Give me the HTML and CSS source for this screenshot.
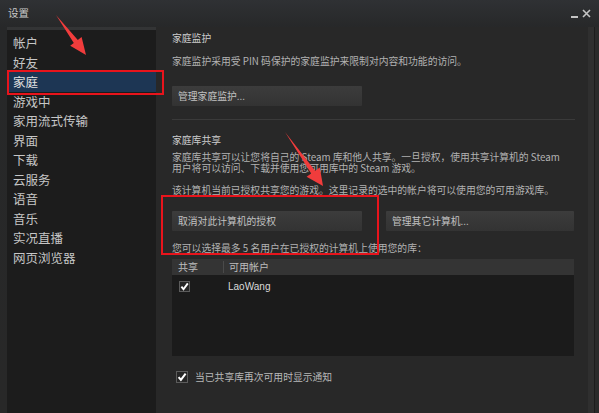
FILE: index.html
```html
<!DOCTYPE html>
<html lang="zh-CN">
<head>
<meta charset="utf-8">
<title>设置</title>
<link rel="stylesheet" href="styles.css">
</head>
<body>
<div class="window">
  <header class="titlebar">
    <span class="title">设置</span>
    <div class="controls">
      <span class="min"></span>
      <svg class="close" width="9" height="9" viewBox="0 0 9 9"><path d="M1 1L8 8M8 1L1 8" stroke="#c4c4c4" stroke-width="1.6" fill="none"/></svg>
    </div>
  </header>
  <div class="main">
    <nav class="sidebar">
      <div class="item">帐户</div>
      <div class="item">好友</div>
      <div class="item selected">家庭</div>
      <div class="item">游戏中</div>
      <div class="item">家用流式传输</div>
      <div class="item">界面</div>
      <div class="item">下载</div>
      <div class="item">云服务</div>
      <div class="item">语音</div>
      <div class="item">音乐</div>
      <div class="item">实况直播</div>
      <div class="item">网页浏览器</div>
    </nav>
    <section class="content">
      <h2 class="heading">家庭监护</h2>
      <p class="desc">家庭监护采用受 PIN 码保护的家庭监护来限制对内容和功能的访问。</p>
      <div class="btn btn-first">管理家庭监护...</div>
      <div class="separator"></div>
      <h2 class="heading heading-2">家庭库共享</h2>
      <p class="para"><span class="line">家庭库共享可以让您将自己的 Steam 库和他人共享。一旦授权，使用共享计算机的 Steam</span><span class="line">用户将可以访问、下载并使用您可用库中的 Steam 游戏。</span></p>
      <p class="desc desc-2">该计算机当前已授权共享您的游戏。这里记录的选中的帐户将可以使用您的可用游戏库。</p>
      <div class="btn-row">
        <div class="btn btn-left">取消对此计算机的授权</div>
        <div class="btn btn-right">管理其它计算机...</div>
      </div>
      <p class="desc desc-3">您可以选择最多 5 名用户在已授权的计算机上使用您的库：</p>
      <div class="table">
        <div class="thead">
          <div class="col-share">共享</div>
          <div class="col-acct">可用帐户</div>
        </div>
        <div class="tbody">
          <div class="row">
            <div class="col-share cell-check">
              <svg class="check" width="11" height="11" viewBox="0 0 11 11"><rect x="0.5" y="0.5" width="10" height="10" fill="#262626" stroke="#5c5c5c"/><path d="M2.4 5.6L4.5 8.2L8.8 2.4" stroke="#fff" stroke-width="1.9" fill="none"/></svg>
            </div>
            <div class="col-acct name">LaoWang</div>
          </div>
        </div>
      </div>
      <label class="notify">
        <svg class="check" width="12" height="12" viewBox="0 0 12 12"><rect x="0.5" y="0.5" width="11" height="11" fill="#262626" stroke="#5c5c5c"/><path d="M2.6 6.1L4.9 8.9L9.6 2.6" stroke="#fff" stroke-width="2" fill="none"/></svg>
        <span>当已共享库再次可用时显示通知</span>
      </label>
    </section>
    <div class="edge">
      <div class="edge-light"></div>
      <div class="edge-dark"></div>
    </div>
  </div>
  <div class="mark mark-nav"></div>
  <div class="mark mark-btn"></div>
  <svg class="arrows" width="599" height="413" viewBox="0 0 599 413">
    <polygon points="56,15 77.8,39.9 81.6,37.1 86,55 70.2,45.8 73.8,42.9" fill="#f03c3c"/>
    <polygon points="285,132 315.2,170.7 319.8,167.4 323,186 306.6,176.8 311.2,173.5" fill="#f03c3c"/>
  </svg>
</div>
</body>
</html>
```

FILE: styles.css
```css
* { box-sizing: border-box; }

html, body {
  margin: 0;
  padding: 0;
  background: #262626;
}

body {
  font-family: "Noto Sans CJK SC", "Noto Sans", sans-serif;
}

.window {
  position: relative;
  width: 599px;
  height: 413px;
  display: flex;
  flex-direction: column;
  background: linear-gradient(#2f3134 0, #272829 27px, #282828 100%);
  overflow: hidden;
}

.titlebar {
  height: 27px;
  flex: none;
  display: flex;
  align-items: center;
  justify-content: space-between;
  padding: 0 8px 2px 8px;
  color: #c8c8c8;
  font-size: 10.5px;
}

.controls {
  display: flex;
  align-items: center;
  gap: 4px;
  padding-top: 1px;
}

.min {
  width: 7px;
  height: 2px;
  background: #c4c4c4;
  margin-top: 7px;
}

.main {
  flex: 1;
  display: flex;
  padding-left: 7px;
  min-height: 0;
}

.sidebar {
  width: 149px;
  flex: none;
  background: #1c1c1c;
  border-top: 3px solid #333435;
  padding-top: 3px;
}

.item {
  height: 19.5px;
  line-height: 19.5px;
  padding-left: 6px;
  font-size: 12.5px;
  color: #c6c6c6;
  white-space: nowrap;
}

.item.selected {
  background: #1d3654;
  color: #e2e2e2;
}

.content {
  flex: 1;
  background: #282828;
  padding: 4px 13px 0 16px;
  color: #b2b2b2;
  font-size: 9.8px;
}

.heading {
  margin: 0;
  font-size: 9.8px;
  font-weight: normal;
  line-height: 14px;
  color: #cdcdcd;
}

.heading-2 {
  margin-top: 13px;
}

.desc {
  margin: 9px 0 0 0;
  line-height: 14px;
  white-space: nowrap;
}

.desc-2 { margin-top: 9px; }
.desc-3 { margin-top: 10px; }

.para {
  margin: 5px 0 0 0;
  display: flex;
  flex-direction: column;
  white-space: nowrap;
}

.line {
  display: block;
  height: 11px;
  line-height: 11px;
}

.btn {
  height: 20px;
  line-height: 20px;
  padding-left: 6px;
  background: linear-gradient(#3c3c3c, #333333);
  color: #c2c2c2;
  font-size: 9.8px;
  border-radius: 1px;
}

.btn-first {
  width: 190px;
  margin-top: 18px;
}

.separator {
  height: 1px;
  background: #3a3a3a;
  margin-top: 13px;
  width: 403px;
}

.btn-row {
  display: flex;
  gap: 24px;
  margin-top: 14px;
}

.btn-left { width: 190px; }
.btn-right { width: 188px; }

.table {
  margin-top: 4px;
  width: 402px;
}

.thead {
  height: 16px;
  background: #343434;
  display: flex;
  align-items: center;
  color: #bdbdbd;
  font-size: 10px;
}

.thead .col-share {
  width: 52px;
  padding-left: 6px;
  border-right: 1px solid #4a4a4a;
  height: 12px;
  line-height: 12px;
}

.thead .col-acct {
  padding-left: 5px;
  line-height: 12px;
}

.tbody {
  height: 81px;
  background: #1b1b1b;
}

.row {
  display: flex;
  align-items: center;
  height: 17px;
  padding-top: 3px;
  box-sizing: content-box;
}

.row .col-share {
  width: 56px;
  padding-left: 7px;
  display: flex;
  align-items: center;
}

.name {
  font-family: "Liberation Sans", Arial, sans-serif;
  font-size: 10px;
  color: #dadada;
}

.check { display: block; }

.notify {
  display: flex;
  align-items: center;
  gap: 7px;
  margin-top: 14px;
  padding-left: 4px;
  color: #b8b8b8;
  font-size: 9.8px;
  line-height: 14px;
}

.edge {
  width: 12px;
  flex: none;
  display: flex;
  background: #2a2a2a;
}

.edge-light {
  width: 6px;
  background: #2f2f2f;
}

.edge-dark {
  width: 1px;
  background: #1c1c1c;
}

.mark {
  position: absolute;
  border: 2.5px solid #e8141c;
  pointer-events: none;
}

.mark-nav {
  left: 7px;
  top: 70px;
  width: 157px;
  height: 25px;
}

.mark-btn {
  left: 161px;
  top: 195px;
  width: 218px;
  height: 60px;
}

.arrows {
  position: absolute;
  left: 0;
  top: 0;
  pointer-events: none;
}
```
